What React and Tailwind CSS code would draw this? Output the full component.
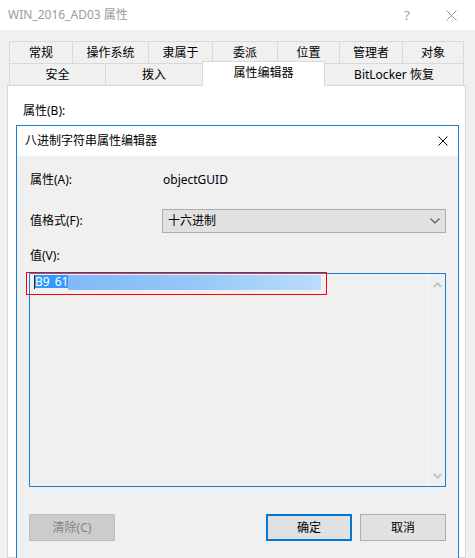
export default function App() {
  const tab =
    "flex items-center justify-center border-l border-t border-[#d9d9d9] bg-[#f0f0f0] text-[12px] text-black whitespace-nowrap";
  return (
    <div className="relative flex h-[558px] w-[475px] flex-col overflow-hidden bg-[#f0f0f0] font-['Noto_Sans','Noto_Sans_CJK_SC',sans-serif] text-[12px] leading-[16px] text-black">
      {/* window title bar */}
      <div className="flex h-[30px] shrink-0 items-center bg-white pl-[8px]">
        <span className="text-[12px] text-[#9b9b9b]">WIN_2016_AD03 属性</span>
        <div className="ml-auto flex items-center">
          <span className="mr-[36px] text-[13px] text-[#a0a0a0]">?</span>
          <svg width="11" height="11" viewBox="0 0 11 11" className="mr-[18px]">
            <path d="M0.5 0.5L10.5 10.5M10.5 0.5L0.5 10.5" stroke="#9b9b9b" strokeWidth="1" />
          </svg>
        </div>
      </div>

      {/* tabs */}
      <div className="ml-[9px] mt-[11px] w-[455px] shrink-0">
        <div className="flex h-[22px]">
          <div className={`${tab} w-[63px]`}>常规</div>
          <div className={`${tab} w-[76px]`}>操作系统</div>
          <div className={`${tab} w-[64px]`}>隶属于</div>
          <div className={`${tab} w-[65px]`}>委派</div>
          <div className={`${tab} w-[62px]`}>位置</div>
          <div className={`${tab} w-[63px]`}>管理者</div>
          <div className={`${tab} w-[62px] border-r`}>对象</div>
        </div>
        <div className="flex h-[22px]">
          <div className={`${tab} w-[96px]`}>安全</div>
          <div className={`${tab} w-[97px]`}>拨入</div>
          <div className="relative z-10 -mt-[2px] flex h-[25px] w-[123px] items-center justify-center border-l border-r border-t border-[#d9d9d9] bg-white pb-[2px] text-[12px]">
            属性编辑器
          </div>
          <div className="flex w-[139px] items-center justify-center border-r border-t border-[#d9d9d9] bg-[#f0f0f0] text-[12px]">
            BitLocker 恢复
          </div>
        </div>
      </div>

      {/* property page panel */}
      <div className="ml-[7px] w-[459px] flex-1 border border-[#d9d9d9] bg-white pl-[15px] pt-[17px]">
        <div className="h-[16px]">属性(B):</div>
      </div>

      {/* editor dialog */}
      <div className="absolute left-[16px] top-[125px] flex h-[450px] w-[443px] flex-col border border-[#1b7fd5] bg-[#f0f0f0]">
        <div className="flex h-[30px] shrink-0 items-center bg-white pl-[8px] pr-[10px]">
          <span>八进制字符串属性编辑器</span>
          <svg width="10" height="10" viewBox="0 0 10 10" className="ml-auto">
            <path d="M0.5 0.5L9.5 9.5M9.5 0.5L0.5 9.5" stroke="#000" strokeWidth="1" />
          </svg>
        </div>
        <div className="flex flex-col px-[12px] pt-[16px]">
          <div className="flex h-[16px] items-center">
            <div className="w-[133px] pl-[1px]">属性(A):</div>
            <div className="pl-[1px]">objectGUID</div>
          </div>
          <div className="mt-[21px] flex h-[24px] items-center">
            <div className="w-[133px] pl-[1px]">值格式(F):</div>
            <div className="flex h-[24px] flex-1 items-center border border-[#adadad] bg-[#e1e1e1] pl-[5px] pr-[5px]">
              <span>十六进制</span>
              <svg width="10" height="6" viewBox="0 0 10 6" className="ml-auto">
                <path d="M0.5 0.5L5 5L9.5 0.5" fill="none" stroke="#555" strokeWidth="1.1" />
              </svg>
            </div>
          </div>
          <div className="mt-[15px] h-[16px] pl-[1px]">值(V):</div>
          <div className="mt-[9px] flex h-[214px] border border-[#1b7fd5] bg-[#f0f0f0]">
            <div className="flex flex-1 items-start pl-[4px] pt-[1px]">
              <div className="relative flex h-[15px] items-start">
                <div className="absolute left-0 top-0 z-10 h-[14px] w-px bg-[#3a2a10]" />
                <span className="flex h-[13px] w-[34px] items-center bg-[#3399ff] pl-[1px] text-[12px] leading-[13px] text-white">
                  <span>B9</span>
                  <span className="ml-[5px]">61</span>
                </span>
                <div className="h-[15px] w-[253px] bg-linear-to-r from-[#80b9f6] via-[#95c7f7] to-[#bbdcfa]" />
              </div>
            </div>
            <div className="flex w-[17px] flex-col items-center justify-between border-l border-[#fafafa] pb-[7px] pt-[8px]">
              <svg width="9" height="6" viewBox="0 0 9 6">
                <path d="M0.8 5L4.5 1.3L8.2 5" fill="none" stroke="#c2c2c2" strokeWidth="2" />
              </svg>
              <svg width="9" height="6" viewBox="0 0 9 6">
                <path d="M0.8 1L4.5 4.7L8.2 1" fill="none" stroke="#c2c2c2" strokeWidth="2" />
              </svg>
            </div>
          </div>
          <div className="mt-[27px] flex h-[27px] items-center">
            <div className="flex h-[27px] w-[86px] items-center justify-center border border-[#bfbfbf] bg-[#cccccc] text-[#838383]">
              清除(C)
            </div>
            <div className="ml-auto flex h-[27px] w-[86px] items-center justify-center border-2 border-[#0078d7] bg-[#e1e1e1]">
              确定
            </div>
            <div className="ml-[8px] flex h-[27px] w-[86px] items-center justify-center border border-[#adadad] bg-[#e1e1e1]">
              取消
            </div>
          </div>
        </div>
      </div>

      {/* red annotation box */}
      <div className="pointer-events-none absolute left-[26px] top-[272px] z-20 h-[23px] w-[301px] border border-[#ff0000]" />
    </div>
  );
}
